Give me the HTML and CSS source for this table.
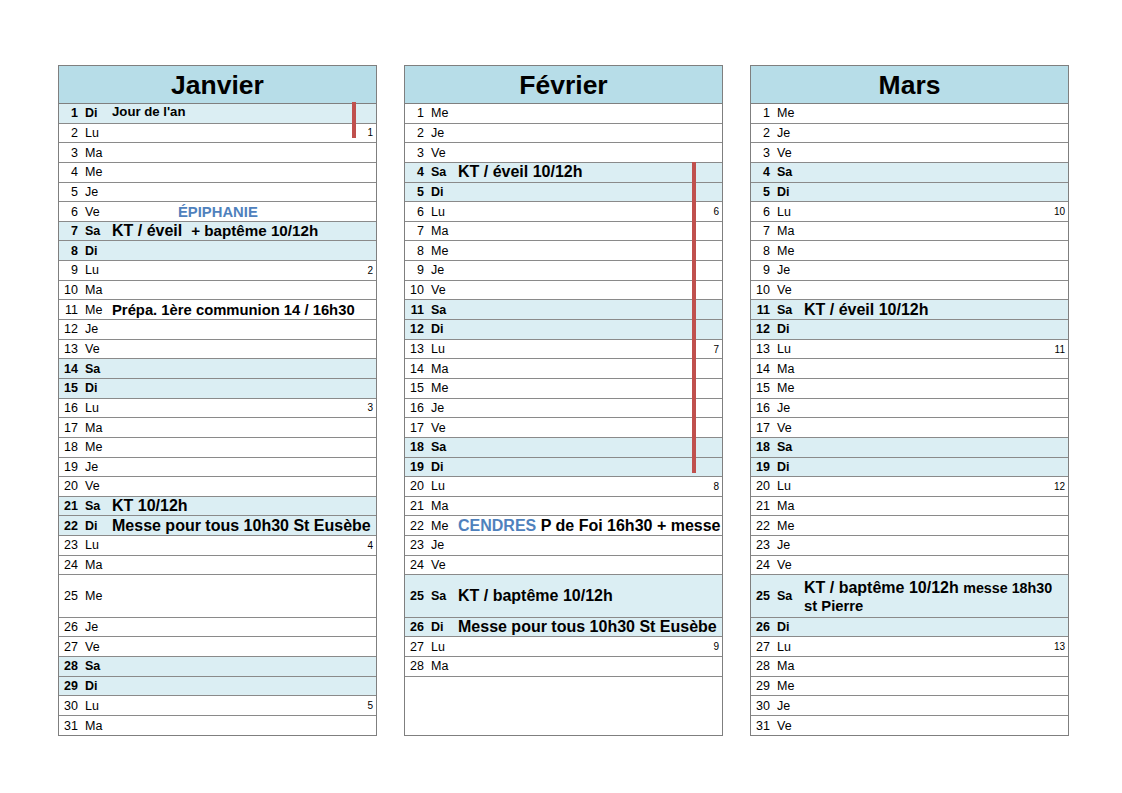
FILE: index.html
```html
<!DOCTYPE html>
<html lang="fr">
<head>
<meta charset="utf-8">
<title>Calendrier</title>
<link rel="stylesheet" href="styles.css">
</head>
<body>
<div class="page">

<section class="month">
  <div class="bar bar-jan"></div>
  <h1 class="title">Janvier</h1>
  <div class="row we"><span class="n">1</span><span class="d">Di</span><span class="ev small raised">Jour de l'an</span></div>
  <div class="row"><span class="n">2</span><span class="d">Lu</span><span class="ev"></span><span class="wk">1</span></div>
  <div class="row"><span class="n">3</span><span class="d">Ma</span></div>
  <div class="row"><span class="n">4</span><span class="d">Me</span></div>
  <div class="row"><span class="n">5</span><span class="d">Je</span></div>
  <div class="row"><span class="n">6</span><span class="d">Ve</span><span class="ev blue epi">ÉPIPHANIE</span></div>
  <div class="row we"><span class="n">7</span><span class="d">Sa</span><span class="ev">KT / éveil &nbsp;<span class="mid-b">+ baptême 10/12h</span></span></div>
  <div class="row we"><span class="n">8</span><span class="d">Di</span></div>
  <div class="row"><span class="n">9</span><span class="d">Lu</span><span class="ev"></span><span class="wk">2</span></div>
  <div class="row"><span class="n">10</span><span class="d">Ma</span></div>
  <div class="row"><span class="n">11</span><span class="d">Me</span><span class="ev prep">Prépa. 1ère communion 14 / 16h30</span></div>
  <div class="row"><span class="n">12</span><span class="d">Je</span></div>
  <div class="row"><span class="n">13</span><span class="d">Ve</span></div>
  <div class="row we"><span class="n">14</span><span class="d">Sa</span></div>
  <div class="row we"><span class="n">15</span><span class="d">Di</span></div>
  <div class="row"><span class="n">16</span><span class="d">Lu</span><span class="ev"></span><span class="wk">3</span></div>
  <div class="row"><span class="n">17</span><span class="d">Ma</span></div>
  <div class="row"><span class="n">18</span><span class="d">Me</span></div>
  <div class="row"><span class="n">19</span><span class="d">Je</span></div>
  <div class="row"><span class="n">20</span><span class="d">Ve</span></div>
  <div class="row we"><span class="n">21</span><span class="d">Sa</span><span class="ev">KT 10/12h</span></div>
  <div class="row we"><span class="n">22</span><span class="d">Di</span><span class="ev">Messe pour tous 10h30 St Eusèbe</span></div>
  <div class="row"><span class="n">23</span><span class="d">Lu</span><span class="ev"></span><span class="wk">4</span></div>
  <div class="row"><span class="n">24</span><span class="d">Ma</span></div>
  <div class="row tall"><span class="n">25</span><span class="d">Me</span></div>
  <div class="row"><span class="n">26</span><span class="d">Je</span></div>
  <div class="row"><span class="n">27</span><span class="d">Ve</span></div>
  <div class="row we"><span class="n">28</span><span class="d">Sa</span></div>
  <div class="row we"><span class="n">29</span><span class="d">Di</span></div>
  <div class="row"><span class="n">30</span><span class="d">Lu</span><span class="ev"></span><span class="wk">5</span></div>
  <div class="row last"><span class="n">31</span><span class="d">Ma</span></div>
</section>

<section class="month">
  <div class="bar bar-feb"></div>
  <h1 class="title">Février</h1>
  <div class="row"><span class="n">1</span><span class="d">Me</span></div>
  <div class="row"><span class="n">2</span><span class="d">Je</span></div>
  <div class="row"><span class="n">3</span><span class="d">Ve</span></div>
  <div class="row we"><span class="n">4</span><span class="d">Sa</span><span class="ev">KT / éveil 10/12h</span></div>
  <div class="row we"><span class="n">5</span><span class="d">Di</span></div>
  <div class="row"><span class="n">6</span><span class="d">Lu</span><span class="ev"></span><span class="wk">6</span></div>
  <div class="row"><span class="n">7</span><span class="d">Ma</span></div>
  <div class="row"><span class="n">8</span><span class="d">Me</span></div>
  <div class="row"><span class="n">9</span><span class="d">Je</span></div>
  <div class="row"><span class="n">10</span><span class="d">Ve</span></div>
  <div class="row we"><span class="n">11</span><span class="d">Sa</span></div>
  <div class="row we"><span class="n">12</span><span class="d">Di</span></div>
  <div class="row"><span class="n">13</span><span class="d">Lu</span><span class="ev"></span><span class="wk">7</span></div>
  <div class="row"><span class="n">14</span><span class="d">Ma</span></div>
  <div class="row"><span class="n">15</span><span class="d">Me</span></div>
  <div class="row"><span class="n">16</span><span class="d">Je</span></div>
  <div class="row"><span class="n">17</span><span class="d">Ve</span></div>
  <div class="row we"><span class="n">18</span><span class="d">Sa</span></div>
  <div class="row we"><span class="n">19</span><span class="d">Di</span></div>
  <div class="row"><span class="n">20</span><span class="d">Lu</span><span class="ev"></span><span class="wk">8</span></div>
  <div class="row"><span class="n">21</span><span class="d">Ma</span></div>
  <div class="row"><span class="n">22</span><span class="d">Me</span><span class="ev"><span class="blue">CENDRES</span> P de Foi 16h30 + messe</span></div>
  <div class="row"><span class="n">23</span><span class="d">Je</span></div>
  <div class="row"><span class="n">24</span><span class="d">Ve</span></div>
  <div class="row we tall"><span class="n">25</span><span class="d">Sa</span><span class="ev">KT / baptême 10/12h</span></div>
  <div class="row we"><span class="n">26</span><span class="d">Di</span><span class="ev">Messe pour tous 10h30 St Eusèbe</span></div>
  <div class="row"><span class="n">27</span><span class="d">Lu</span><span class="ev"></span><span class="wk">9</span></div>
  <div class="row"><span class="n">28</span><span class="d">Ma</span></div>
  <div class="filler"></div>
</section>

<section class="month">
  <h1 class="title">Mars</h1>
  <div class="row"><span class="n">1</span><span class="d">Me</span></div>
  <div class="row"><span class="n">2</span><span class="d">Je</span></div>
  <div class="row"><span class="n">3</span><span class="d">Ve</span></div>
  <div class="row we"><span class="n">4</span><span class="d">Sa</span></div>
  <div class="row we"><span class="n">5</span><span class="d">Di</span></div>
  <div class="row"><span class="n">6</span><span class="d">Lu</span><span class="ev"></span><span class="wk">10</span></div>
  <div class="row"><span class="n">7</span><span class="d">Ma</span></div>
  <div class="row"><span class="n">8</span><span class="d">Me</span></div>
  <div class="row"><span class="n">9</span><span class="d">Je</span></div>
  <div class="row"><span class="n">10</span><span class="d">Ve</span></div>
  <div class="row we"><span class="n">11</span><span class="d">Sa</span><span class="ev">KT / éveil 10/12h</span></div>
  <div class="row we"><span class="n">12</span><span class="d">Di</span></div>
  <div class="row"><span class="n">13</span><span class="d">Lu</span><span class="ev"></span><span class="wk">11</span></div>
  <div class="row"><span class="n">14</span><span class="d">Ma</span></div>
  <div class="row"><span class="n">15</span><span class="d">Me</span></div>
  <div class="row"><span class="n">16</span><span class="d">Je</span></div>
  <div class="row"><span class="n">17</span><span class="d">Ve</span></div>
  <div class="row we"><span class="n">18</span><span class="d">Sa</span></div>
  <div class="row we"><span class="n">19</span><span class="d">Di</span></div>
  <div class="row"><span class="n">20</span><span class="d">Lu</span><span class="ev"></span><span class="wk">12</span></div>
  <div class="row"><span class="n">21</span><span class="d">Ma</span></div>
  <div class="row"><span class="n">22</span><span class="d">Me</span></div>
  <div class="row"><span class="n">23</span><span class="d">Je</span></div>
  <div class="row"><span class="n">24</span><span class="d">Ve</span></div>
  <div class="row we tall"><span class="n">25</span><span class="d">Sa</span><span class="ev two">KT / baptême 10/12h <span class="mid">messe 18h30</span><br><span class="mid2">st Pierre</span></span></div>
  <div class="row we"><span class="n">26</span><span class="d">Di</span></div>
  <div class="row"><span class="n">27</span><span class="d">Lu</span><span class="ev"></span><span class="wk">13</span></div>
  <div class="row"><span class="n">28</span><span class="d">Ma</span></div>
  <div class="row"><span class="n">29</span><span class="d">Me</span></div>
  <div class="row"><span class="n">30</span><span class="d">Je</span></div>
  <div class="row last"><span class="n">31</span><span class="d">Ve</span></div>
</section>

</div>
</body>
</html>
```

FILE: styles.css
```css
* { box-sizing: border-box; }
html, body { margin: 0; padding: 0; background: #fff; }
body {
  font-family: "Liberation Sans", Arial, sans-serif;
  color: #000;
  width: 1122px;
  height: 793px;
}
.page {
  display: flex;
  gap: 27px;
  padding: 65px 0 0 58px;
  align-items: stretch;
}
.month {
  position: relative;
  width: 319px;
  height: 671px;
  border: 1px solid #7f7f7f;
  display: flex;
  flex-direction: column;
}
.title {
  margin: 0;
  height: 38px;
  flex: none;
  background: #b7dde8;
  border-bottom: 1px solid #7f7f7f;
  text-align: center;
  font-size: 26.5px;
  font-weight: bold;
  line-height: 38px;
}
.row {
  flex: none;
  height: 19.65px;
  border-bottom: 1px solid #8a8a8a;
  display: flex;
  align-items: center;
  font-size: 12.5px;
  white-space: nowrap;
  position: relative;
}
.row.last { border-bottom: none; }
.row.tall { height: 42.4px; }
.row.we { background: #dbeef3; }
.row.we .n, .row.we .d { font-weight: bold; }
.n {
  width: 19px;
  text-align: right;
  flex: none;
}
.d {
  width: 34px;
  padding-left: 7px;
  flex: none;
}
.ev {
  flex: 1;
  font-size: 16px;
  font-weight: bold;
  overflow: visible;
}
.ev.small { font-size: 13.2px; }
.ev.raised { position: relative; top: -2px; }
.ev.epi { padding-left: 66px; font-size: 14.8px; }
.ev.prep { font-size: 14.8px; }
.ev.two { line-height: 17px; padding-top: 1px; }
.mid { font-size: 14.3px; }
.mid-b { font-size: 15.2px; }
.mid2 { font-size: 14.8px; }
.blue { color: #4f81bd; }
.wk {
  flex: none;
  width: 24px;
  text-align: right;
  padding-right: 3px;
  font-size: 10px;
}
.filler { flex: 1; }
.bar {
  position: absolute;
  width: 4px;
  background: #c0504d;
  z-index: 2;
}
.bar-jan { left: 293px; top: 36px; height: 36px; }
.bar-feb { left: 287px; top: 96px; height: 311px; }
```
